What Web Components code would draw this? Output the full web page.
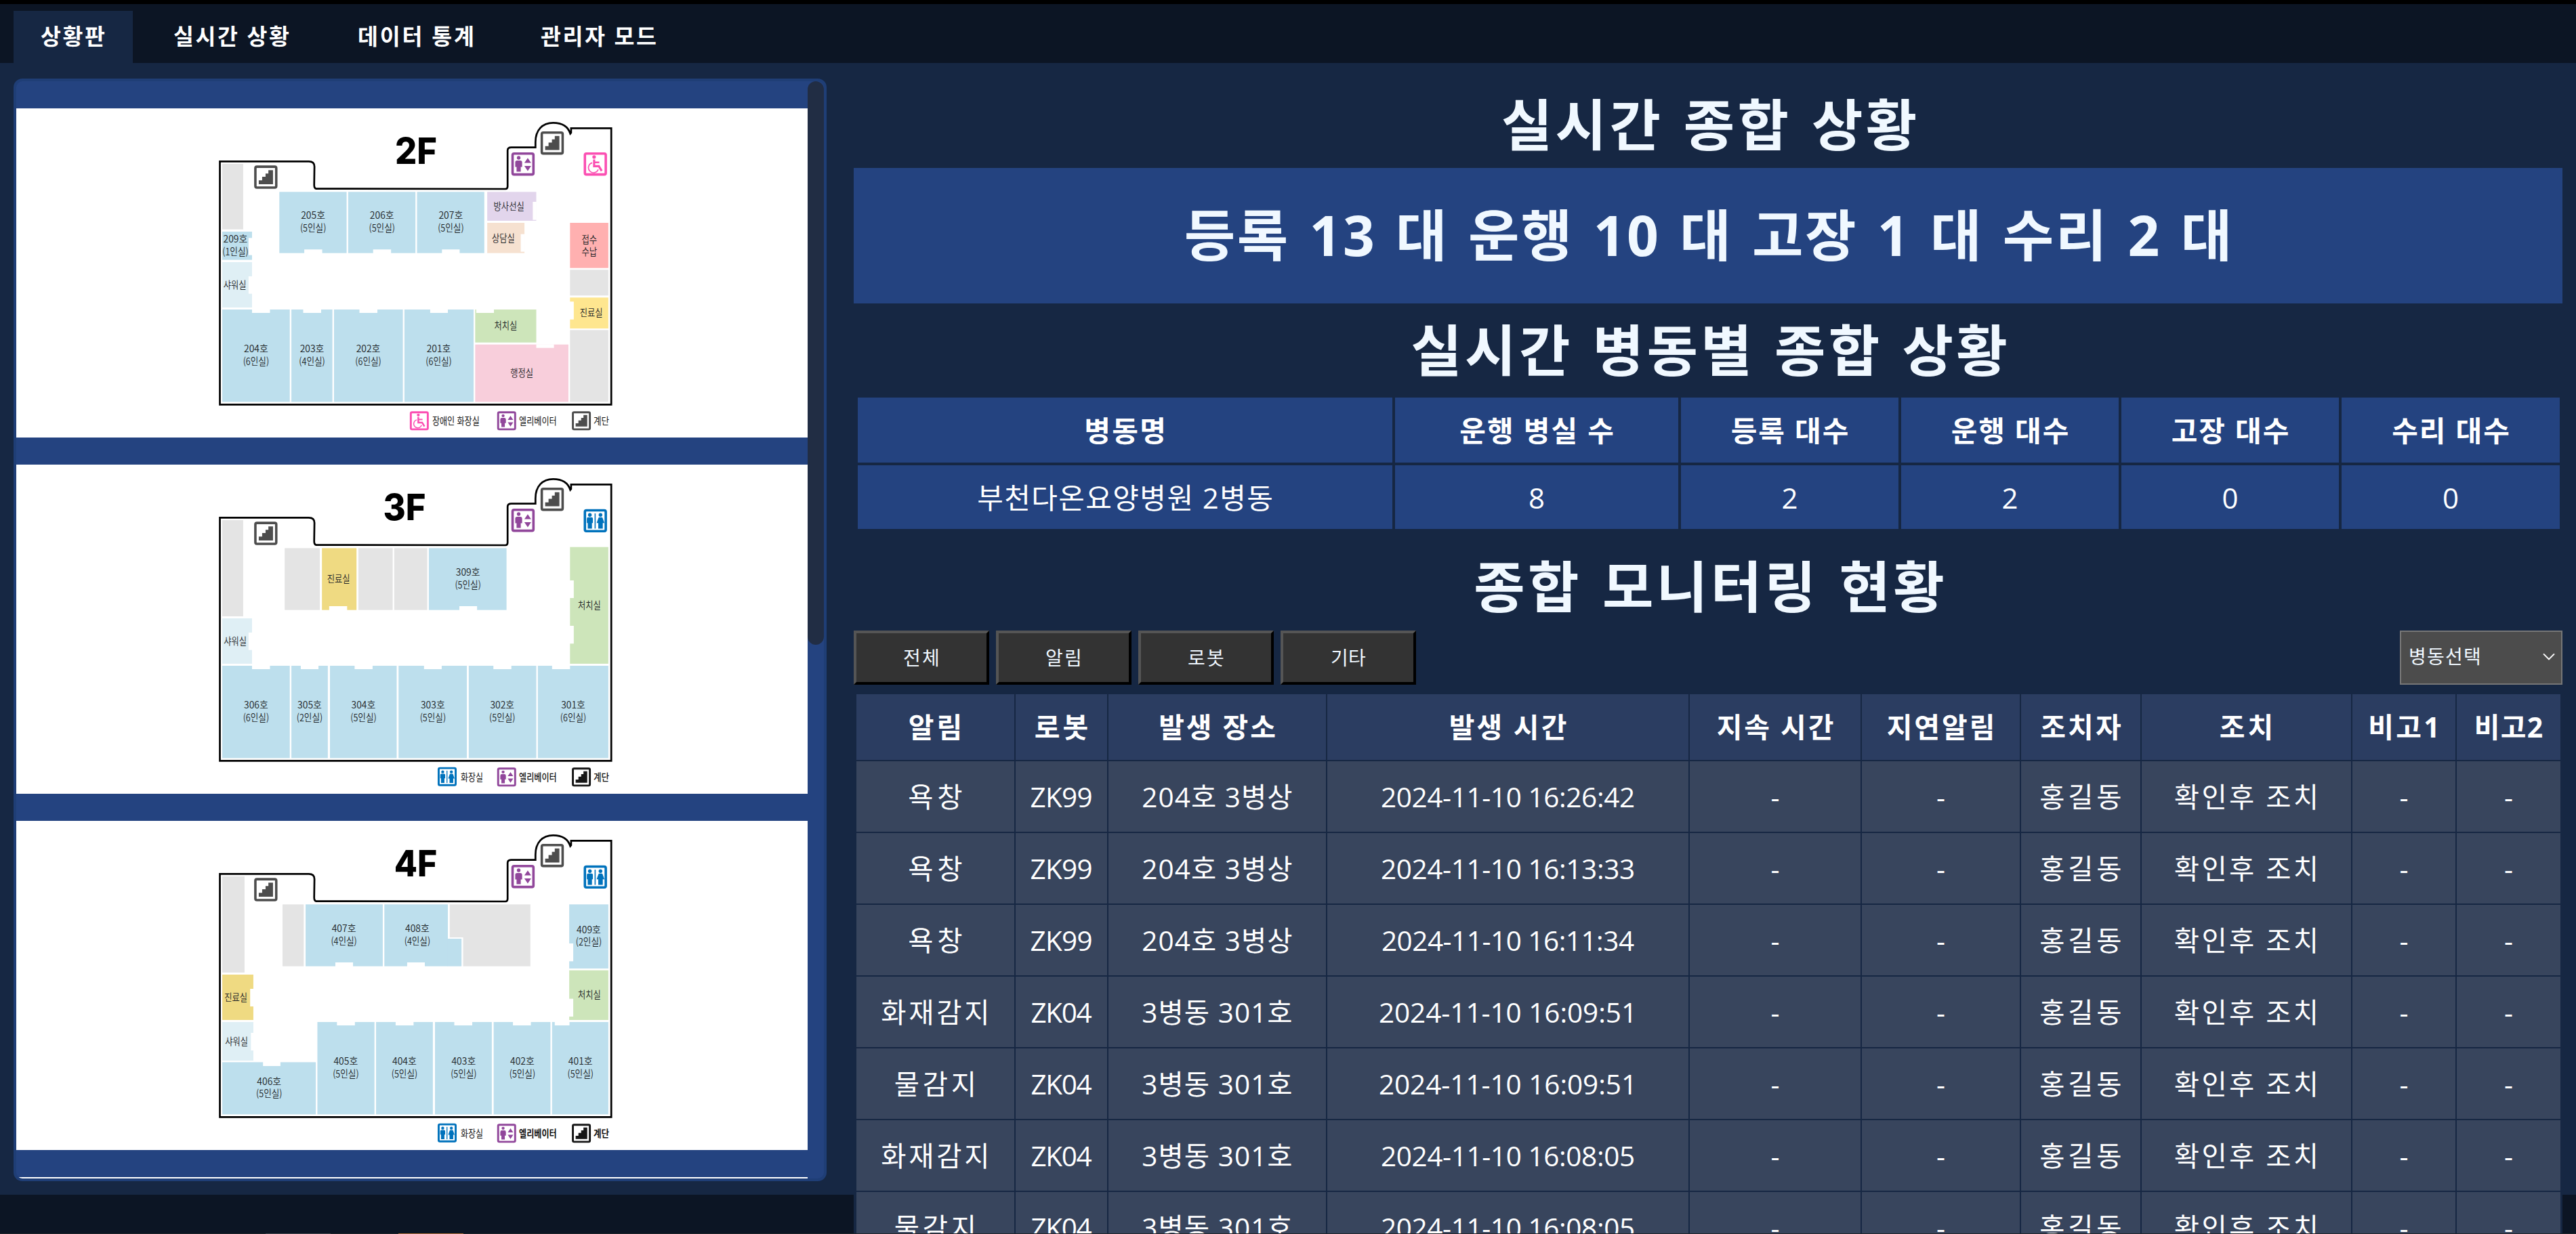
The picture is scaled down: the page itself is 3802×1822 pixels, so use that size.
<!DOCTYPE html>
<html lang="ko">
<head>
<meta charset="utf-8">
<title>상황판</title>
<style>
  html, body { margin: 0; height: 1822px; overflow: hidden; }
  body { background: #0c1524; font-family: "Open Sans", "Noto Sans CJK KR", sans-serif; color: #fff; }
</style>
</head>
<body>
<dashboard-app></dashboard-app>

<script>
const FAMILY = '"Open Sans", "Noto Sans CJK KR", sans-serif';
const measure = document.createElement('canvas').getContext('2d');

class BaseElement extends HTMLElement {
  connectedCallback() {
    if (this.shadowRoot) return;
    this.attachShadow({ mode: 'open' }).innerHTML = this.render();
  }
}

/* A run of text spaced so that its glyphs span the given width.
   With a tracking attribute the rest of the width goes into the word spaces. */
class FitText extends BaseElement {
  render() {
    const text = this.getAttribute('text');
    const size = +this.getAttribute('size');
    const weight = this.getAttribute('weight') || 400;
    const width = +this.getAttribute('width');
    let tracking = +this.getAttribute('tracking') || 0;
    let words = 0;
    if (width && text.length > 1) {
      measure.font = `${weight} ${size}px ${FAMILY}`;
      const m = measure.measureText(text);
      const spare = width - (m.actualBoundingBoxRight + m.actualBoundingBoxLeft);
      const gaps = text.length - 1;
      if (tracking) words = (spare - tracking * gaps) / (text.split(' ').length - 1);
      else tracking = spare / gaps;
    }
    return `<style>
      :host { display: block; white-space: nowrap; }
      span { display: block; font: ${weight} ${size}px/1.3 ${FAMILY}; letter-spacing: ${tracking.toFixed(3)}px; word-spacing: ${words.toFixed(3)}px; margin-right: ${(-tracking).toFixed(3)}px; }
    </style><span>${text}</span>`;
  }
}
customElements.define('fit-text', FitText);

const fit = (text, size, weight, width, tracking) =>
  `<fit-text text="${text}" size="${size}" weight="${weight}" width="${width || 0}" tracking="${tracking || 0}"></fit-text>`;

class NavTab extends BaseElement {
  render() {
    return `<style>
      :host { display: flex; align-items: center; height: 77px; padding: 0 40px; box-sizing: border-box; width: var(--tab-width); }
      :host([active]) { background: #162743; }
    </style><slot></slot>`;
  }
}
customElements.define('nav-tab', NavTab);

class NavBar extends BaseElement {
  render() {
    const tabs = [['상황판', 94, 176], ['실시간 상황', 169, 252], ['데이터 통계', 168, 250], ['관리자 모드', 170, 252]];
    return `<style>
      :host { display: flex; align-items: flex-end; gap: 20px; height: 93px; flex: none; padding: 0 20px; box-sizing: border-box; background: #0c1524; border-top: 6px solid #000; }
    </style>` + tabs.map(([t, w, tw], i) =>
      `<nav-tab ${i ? '' : 'active'} style="--tab-width:${tw}px">${fit(t, 32.5, 700, w)}</nav-tab>`).join('');
  }
}
customElements.define('nav-bar', NavBar);

/* ---------- floor plans ---------- */
const SX = 620 / 1568, SY = 1 / 3;
const X = v => +(300 + v * SX).toFixed(2);
const Y = v => +(160 + v * SY).toFixed(2);
const C = { b: '#bddfed', s: '#dfeff5', g: '#e4e4e4', v: '#e2d5ec', o: '#f6e1d0', r: '#ffb0b0', y: '#fee68f', d: '#efda82', n: '#cde5ba', p: '#f8cedb' };

/* room: x1, y1, x2, y2, colour, label lines, label centre x, label centre y */
const FLOORS = {
  2: {
    dy: 0, title: [794, 246, 57],
    rooms: [
      [71,246,149,536,'g'], [71,546,182,671,'b',['209호','(1인실)'],120,580], [71,681,182,882,'s',['샤워실'],118,782],
      [284,370,535,641,'b',['205호','(5인실)'],410,475], [541,370,792,641,'b',['206호','(5인실)'],667,475], [798,370,1049,641,'b',['207호','(5인실)'],924,475],
      [1060,370,1243,498,'v',['방사선실'],1141,436], [1060,507,1199,641,'o',['상담실'],1120,575],
      [1369,507,1512,707,'r',['접수','수납'],1441,582], [1369,715,1512,829,'g'], [1369,838,1512,975,'y',['진료실'],1448,906], [1369,982,1512,1300,'g'],
      [71,891,323,1300,'b',['204호','(6인실)'],197,1066], [329,891,482,1300,'b',['203호','(4인실)'],406,1066], [488,891,745,1300,'b',['202호','(6인실)'],616,1066], [751,891,1009,1300,'b',['201호','(6인실)'],879,1066],
      [1015,891,1243,1037,'n',['처치실'],1129,964], [1015,1046,1363,1300,'p',['행정실'],1189,1174]
    ],
    gaps: [[169,574,183,650],[169,744,183,821],[377,625,444,642],[634,625,701,642],[891,625,957,642],[1230,414,1244,494],[1185,557,1200,635],
      [182,890,249,906],[373,890,440,906],[583,890,650,906],[847,890,913,906],[1019,890,1085,906],[1243,1045,1309,1061],[1368,856,1383,935]],
    wc: 'wheel', wcY: 195, legend: [['wheel',771,1342,856,1030,'장애인 화장실'],['lift',1097,1342,1180,1318,'엘리베이터'],['stair',1376,1342,1458,1514,'계단']], lw: [400,400,400], lc: '#4d4d4d'
  },
  3: {
    dy: 12, title: [751, 235, 58],
    rooms: [
      [71,234,149,660,'g'], [71,669,182,870,'s',['샤워실'],119,770], [304,358,435,632,'g'], [443,358,572,632,'d',['진료실'],505,495],
      [579,358,707,632,'g'], [713,358,836,632,'g'], [842,358,1132,632,'b',['309호','(5인실)'],988,466], [1369,353,1512,870,'n',['처치실'],1441,612],
      [71,879,323,1288,'b',['306호','(6인실)'],197,1054], [329,879,465,1288,'b',['305호','(2인실)'],397,1054], [473,879,722,1288,'b',['304호','(5인실)'],598,1054],
      [729,879,984,1288,'b',['303호','(5인실)'],857,1054], [991,879,1243,1288,'b',['302호','(5인실)'],1116,1054], [1249,879,1512,1288,'b',['301호','(6인실)'],1381,1054]
    ],
    gaps: [[169,732,183,809],[470,615,537,633],[956,615,1022,633],[1368,501,1383,579],[1368,702,1383,781],
      [182,878,249,894],[364,878,430,894],[565,878,632,894],[824,878,890,894],[1083,878,1150,894],[1302,878,1369,894]],
    wc: 'rest', wcY: 185, legend: [['rest',875,1328,962,1043,'화장실'],['lift',1097,1330,1180,1318,'엘리베이터'],['stair',1376,1330,1458,1514,'계단']], lw: [400,500,500], lc: '#161616'
  },
  4: {
    dy: 9, title: [793, 238, 58.5],
    rooms: [
      [71,237,154,663,'g'], [71,672,187,873,'d',['진료실'],122,774], [71,882,187,1053,'s',['샤워실'],124,968], [296,361,375,635,'g'],
      [382,361,670,635,'b',['407호','(4인실)'],525,469], [676,361,913,635,'b',['408호','(4인실)'],799,469], [912,513,964,635,'b'],
      [920,361,1221,507,'g'], [970,506,1221,635,'g'],
      [1366,361,1512,645,'b',['409호','(2인실)'],1439,474], [1366,653,1512,873,'n',['처치실'],1441,763],
      [71,1060,420,1291,'b',['406호','(5인실)'],246,1146], [426,882,639,1291,'b',['405호','(5인실)'],532,1057], [645,882,857,1291,'b',['404호','(5인실)'],751,1057],
      [865,882,1077,1291,'b',['403호','(5인실)'],972,1057], [1084,882,1296,1291,'b',['402호','(5인실)'],1191,1057], [1302,882,1512,1291,'b',['401호','(5인실)'],1408,1057]
    ],
    gaps: [[175,735,188,813],[178,930,188,1008],[493,618,559,636],[761,618,827,636],[1365,534,1381,613],[1365,779,1381,858],
      [223,1059,288,1077],[499,881,566,897],[718,881,785,897],[937,881,1004,897],[1156,881,1223,897],[1312,881,1367,897]],
    wc: 'rest', wcY: 188, legend: [['rest',875,1331,962,1043,'화장실'],['lift',1097,1333,1180,1318,'엘리베이터'],['stair',1376,1333,1458,1514,'계단']], lw: [400,700,600], lc: '#161616'
  }
};

const plate = c => `<rect x="1.8" y="1.8" width="30.8" height="30.8" rx="2.2" fill="#fff" stroke="${c}" stroke-width="3.6"/>`;
const GLYPHS = {
  stair: c => plate(c) + `<path fill="${c}" d="M6.8 27.6V21.8H11.8V16.6H16.8V11.8H21V6.8H27.8V27.6Z"/>`,
  lift: () => plate('#91479b') + `<g fill="#91479b"><circle cx="10.8" cy="8" r="2.7"/><path d="M8.5 12h4.6Q15.9 12 15.9 14.8V21.4H13.9V28.4H7.7V21.4H5.7V14.8Q5.7 12 8.5 12Z"/>
    <path d="M19.2 15.6H29.2L24.2 8.2ZM19.2 20H29.2L24.2 27.6Z"/></g>`,
  rest: () => plate('#0072bc') + `<g fill="#0072bc"><circle cx="9.1" cy="8.6" r="2.7"/><path d="M6.6 12h5Q13.6 12 13.6 14V20.5H12.2V28.8H6V20.5H4.7V14Q4.7 12 6.6 12Z"/>
    <rect x="16.1" y="6.4" width="1.6" height="22.4"/>
    <circle cx="24.8" cy="8.6" r="2.7"/><path d="M23.2 12h3.2Q27.6 12 28 13.4L30.6 20.6H28.2V28.8H21.5V20.6H19.1L21.7 13.4Q22.1 12 23.2 12Z"/></g>`,
  wheel: () => plate('#fb4fb2') + `<circle cx="15.4" cy="6.8" r="2.6" fill="#fb4fb2"/><g fill="none" stroke="#fb4fb2">
    <path stroke-width="3.1" d="M15.4 10.4V20.4H22.4L26.6 27.4"/><path stroke-width="2.4" d="M15.6 14.8H23"/>
    <path stroke-width="1.7" d="M12.6 15.4A7.4 7.4 0 1 0 21.4 25.2"/></g>`
};
const icon = (name, x, y, size, colour = '#4d4d4d') =>
  `<g transform="translate(${x} ${y}) scale(${size / 34.4})">${GLYPHS[name](colour)}</g>`;

class FloorPlan extends BaseElement {
  label(text, cx, base, width, size, weight, fill = '#1c2326') {
    return `<text x="${X(cx)}" y="${Y(base)}" text-anchor="middle" textLength="${width}" lengthAdjust="spacingAndGlyphs" font-size="${size}" font-weight="${weight}" fill="${fill}">${text}</text>`;
  }
  render() {
    const f = FLOORS[this.getAttribute('floor')];
    const frame = inner => `<style>:host { display: block; flex: none; height: 486px; background: #fff; } svg { display: block; width: 1168px; height: 486px; }
      text { font-family: "Noto Sans CJK KR", sans-serif; } .title { font-family: Inter, sans-serif; }</style>${inner}`;
    if (!f) return frame('');
    const box = ([x1, y1, x2, y2], c) => `<rect x="${X(x1)}" y="${Y(y1 + f.dy)}" width="${((x2 - x1) * SX).toFixed(2)}" height="${((y2 - y1) * SY).toFixed(2)}" fill="${c}"/>`;
    const widthOf = t => /^\(/.test(t) ? 38.4 : /^\d/.test(t) ? 35.8 : t.length * 11.4 - (t.length > 2 ? 0.4 : 0);
    let out = '';
    for (const r of f.rooms) out += box(r, C[r[4]]);
    for (const g of f.gaps) out += box(g, '#fff');
    for (const r of f.rooms) (r[5] || []).forEach((t, i) => { out += this.label(t, r[6], r[7] + f.dy + i * 55 + 15, widthOf(t), 14.4, 350); });
    out += `<path fill="none" stroke="#000" stroke-width="2.7" vector-effect="non-scaling-stroke" transform="translate(300 160) scale(${SX} ${SY})"
      d="M62 235H394Q415 235 415 258L414 340Q414 354 421 356L1128 357Q1136 357 1136 346V186Q1136 173 1150 173H1240V150C1240 96 1266 64 1306 64C1340 64 1362 82 1370 112L1373 108V88H1523V1312H62Z"/>`;
    out += icon('stair', X(190), Y(253), 34.4) + icon('stair', X(1259), Y(102), 34.4) + icon('lift', X(1150), Y(195), 34.4) + icon(f.wc, X(1420), Y(f.wcY + f.dy), 34.4);
    const [tx, ty, tw] = f.title;
    const floor = this.getAttribute('floor');
    out += `<text class="title" x="${X(tx)}" y="${Y(ty + f.dy)}" text-anchor="middle" textLength="${tw + 5}" lengthAdjust="spacingAndGlyphs" font-size="53.5" font-weight="800">${floor}F</text>`;
    f.legend.forEach(([name, x, y, a, b, text], i) => {
      out += icon(name, X(x), Y(y + f.dy), 28, f.lc);
      out += this.label(text, (a + b) / 2, 1401, +((b - a) * SX + 1).toFixed(1), 14.4, f.lw[i], '#111');
    });
    return frame(`<svg viewBox="24 160 1168 486">${out}</svg>`);
  }
}
customElements.define('floor-plan', FloorPlan);

class FloorPanel extends BaseElement {
  render() {
    return `<style>
      :host { display: flex; flex: none; box-sizing: border-box; width: 1200px; height: 1628px; border: 4px solid #1f3e76; border-radius: 13px; background: #244380; overflow: hidden; }
      .list { display: flex; flex-direction: column; gap: 40px; width: 1168px; padding-top: 40px; }
      .track { width: 24px; }
      .thumb { height: 832px; border-radius: 12px; background: #212d44; }
    </style>
    <div class="list"><floor-plan floor="2"></floor-plan><floor-plan floor="3"></floor-plan><floor-plan floor="4"></floor-plan><floor-plan floor="5"></floor-plan></div>
    <div class="track"><div class="thumb"></div></div>`;
  }
}
customElements.define('floor-panel', FloorPanel);

/* ---------- right column ---------- */
class SectionTitle extends BaseElement {
  render() {
    return `<style>:host { display: flex; align-items: center; justify-content: center; box-sizing: border-box; color: #f0f8ff; }</style><slot></slot>`;
  }
}
customElements.define('section-title', SectionTitle);

class SummaryBanner extends BaseElement {
  render() {
    return `<style>:host { display: flex; align-items: center; justify-content: center; box-sizing: border-box; height: 200px; padding-bottom: 4px; background: #244380; color: #f0f8ff; }</style>
      ${fit('등록 13 대 운행 10 대 고장 1 대 수리 2 대', 82, 700, 1537, 2.5)}`;
  }
}
customElements.define('summary-banner', SummaryBanner);

const cells = (row, size, weight) => row.map(([t, w]) => `<div>${fit(t, size, weight, w)}</div>`).join('');

class WardTable extends BaseElement {
  render() {
    return `<style>
      :host { display: grid; grid-template-columns: 789px 418px 321px 321px 321px 322px; grid-template-rows: 96px 94px; gap: 4px; padding: 0 4px 0 6px; }
      div { display: flex; align-items: center; justify-content: center; box-sizing: border-box; background: #244380; padding-top: 2px; }
    </style>` + cells([['병동명', 114], ['운행 병실 수', 225], ['등록 대수', 171], ['운행 대수', 171], ['고장 대수', 171], ['수리 대수', 171]], 42, 700)
      + cells([['부천다온요양병원 2병동', 433], ['8'], ['2'], ['2'], ['0'], ['0']], 42, 400);
  }
}
customElements.define('ward-table', WardTable);

class FilterBar extends BaseElement {
  render() {
    return `<style>
      :host { display: flex; gap: 10px; height: 80px; color: #f0f8ff; }
      .btn { display: flex; align-items: center; justify-content: center; box-sizing: border-box; width: 200px; border: 4px solid; border-color: #555 #000 #000 #555; background: #333; }
      .select { display: flex; align-items: center; justify-content: space-between; box-sizing: border-box; width: 240px; margin-left: auto; padding: 0 9px 3px 11px; border: 2px solid #767676; background: #4c4c4c; }
    </style>` + [['전체', 50], ['알림', 50], ['로봇', 52], ['기타', 50]].map(([t, w]) => `<div class="btn">${fit(t, 28, 400, w)}</div>`).join('')
      + `<div class="select">${fit('병동선택', 28, 400, 102)}<svg width="18" height="11" viewBox="0 0 18 11"><path d="M1 1.4L9 9.4L17 1.4" fill="none" stroke="#fff" stroke-width="2"/></svg></div>`;
  }
}
customElements.define('filter-bar', FilterBar);

class EventTable extends BaseElement {
  render() {
    const head = [['알림', 75], ['로봇', 77], ['발생 장소', 170], ['발생 시간', 171], ['지속 시간', 171], ['지연알림', 155], ['조치자', 118], ['조치', 75], ['비고1', 96], ['비고2', 98]];
    const a = ['욕창', 77], f = ['화재감지', 154], m = ['물감지', 114];
    const z9 = ['ZK99', 89], z4 = ['ZK04', 89], p2 = ['204호 3병상', 219], p3 = ['3병동 301호', 220];
    const rows = [[a, z9, p2, '16:26:42'], [a, z9, p2, '16:13:33'], [a, z9, p2, '16:11:34'], [f, z4, p3, '16:09:51'], [m, z4, p3, '16:09:51'], [f, z4, p3, '16:08:05'], [m, z4, p3, '16:08:05']];
    return `<style>
      :host { display: grid; grid-template-columns: 233px 135px 321px 533px 252px 233px 176px 309px 152px 153px; grid-template-rows: 97px repeat(7, 104px); gap: 2px; padding: 0 3px 0 4px; }
      div { display: flex; align-items: center; justify-content: center; box-sizing: border-box; min-width: 0; background: #38455d; padding-top: 2px; }
      div:nth-of-type(-n+10) { background: #2b3d61; padding-top: 1px; }
    </style>` + cells(head, 41, 700)
      + rows.map(([n, r, p, t]) => cells([n, r, p, ['2024-11-10 ' + t, 371], ['-'], ['-'], ['홍길동', 118], ['확인후 조치', 207], ['-'], ['-']], 40.5, 400)).join('');
  }
}
customElements.define('event-table', EventTable);

class StatusBoard extends BaseElement {
  render() {
    return `<style>
      :host { display: flex; flex-direction: column; width: 2522px; height: 1728px; flex: none; overflow: hidden; background: #162743; }
      section-title { flex: none; }
      .t1 { height: 155px; padding: 26px 0 0 3px; }
      .t2 { height: 139px; padding: 0 0 3px 3px; }
      .t3 { height: 150px; padding: 19px 0 0 3px; }
      summary-banner, ward-table, filter-bar, event-table { flex: none; }
      event-table { margin-top: 14px; }
    </style>
    <section-title class="t1">${fit('실시간 종합 상황', 82, 700, 610, 4.4)}</section-title>
    <summary-banner></summary-banner>
    <section-title class="t2">${fit('실시간 병동별 종합 상황', 82, 700, 877, 4.4)}</section-title>
    <ward-table></ward-table>
    <section-title class="t3">${fit('종합 모니터링 현황', 82, 700, 690, 4.4)}</section-title>
    <filter-bar></filter-bar>
    <event-table></event-table>`;
  }
}
customElements.define('status-board', StatusBoard);

class DashboardApp extends BaseElement {
  render() {
    return `<style>
      :host { display: flex; flex-direction: column; width: 3802px; height: 1822px; overflow: hidden; background: #0c1524; }
      main { display: flex; align-items: flex-start; gap: 40px; box-sizing: border-box; height: 1671px; flex: none; padding: 0 20px; background: #162743; }
      floor-panel { margin-top: 23px; }
      footer { display: flex; flex: 1; align-items: flex-end; }
      footer i { display: block; height: 1px; background: #20262a; }
      footer i:nth-child(2) { background: #44494f; }
      footer i:nth-child(4) { background: #b0713a; }
    </style>
    <nav-bar></nav-bar>
    <main><floor-panel></floor-panel><status-board></status-board></main>
    <footer><i style="width:392px"></i><i style="width:96px"></i><i style="width:100px"></i><i style="width:96px"></i><i style="flex:1"></i></footer>`;
  }
}
customElements.define('dashboard-app', DashboardApp);
</script>
</body>
</html>
